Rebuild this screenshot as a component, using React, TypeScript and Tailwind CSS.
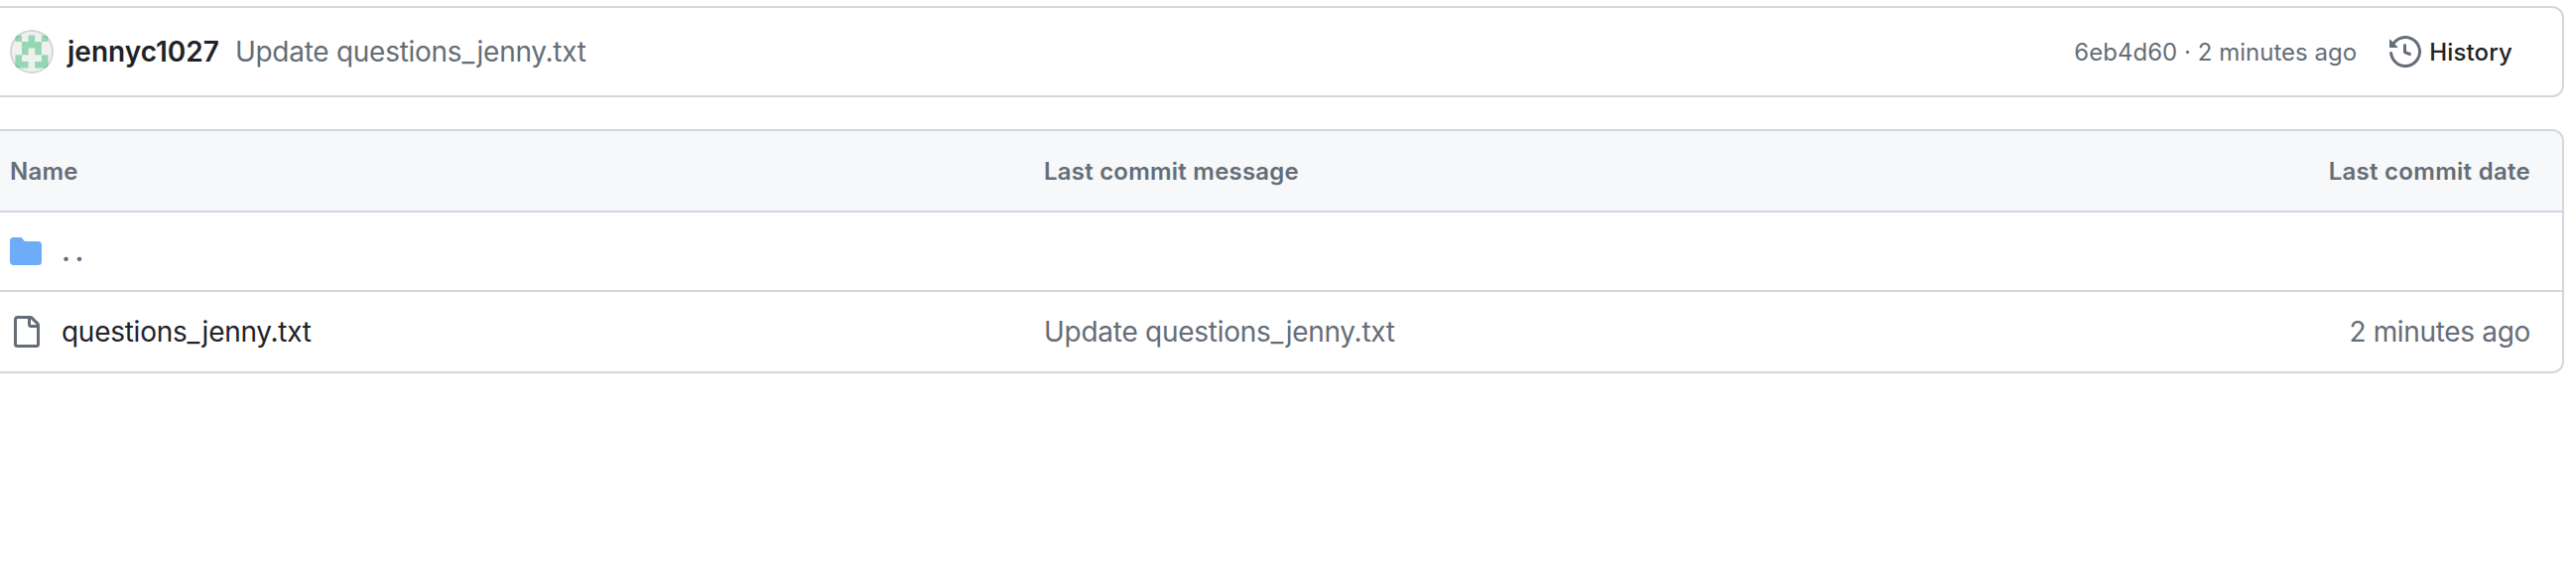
const AVATAR_PATH =
  "M5.4 5.4h6.6v6.6h-6.6zM18.6 5.4h6.6v6.6h6.7v13.2h-6.7v-6.6h-6.6v6.6h-6.6v-13.2h6.6zM31.9 5.4h6.6v6.6h-6.6zM5.4 25.2h6.6v6.7h6.6v6.6h-13.2zM38.5 25.2v13.3h-13.3v-6.6h6.7v-6.7z";

function Avatar() {
  return (
    <svg className="size-11 shrink-0" viewBox="0 0 44 44" aria-hidden="true">
      <defs>
        <clipPath id="avatar-circle">
          <circle cx="22" cy="22" r="22" />
        </clipPath>
      </defs>
      <g clipPath="url(#avatar-circle)">
        <rect width="44" height="44" fill="#f0f0f0" />
        <path d={AVATAR_PATH} fill="#95d7b4" />
      </g>
      <circle cx="22" cy="22" r="21" fill="none" stroke="#1f2328" strokeOpacity="0.12" strokeWidth="2" />
    </svg>
  );
}

function HistoryIcon() {
  return (
    <svg className="size-8 shrink-0 fill-[#656d76]" viewBox="0 0 16 16" aria-hidden="true">
      <path d="m.427 1.927 1.215 1.215a8.002 8.002 0 1 1-1.6 5.685.75.75 0 1 1 1.493-.154 6.5 6.5 0 1 0 1.18-4.458l1.358 1.358A.25.25 0 0 1 3.896 6H.25A.25.25 0 0 1 0 5.75V2.104a.25.25 0 0 1 .427-.177ZM7.75 4a.75.75 0 0 1 .75.75v2.992l2.028.812a.75.75 0 0 1-.557 1.392l-2.5-1A.751.751 0 0 1 7 8.25v-3.5A.75.75 0 0 1 7.75 4Z" />
    </svg>
  );
}

function FolderIcon() {
  return (
    <svg className="size-8 shrink-0 fill-[#6cacf8]" viewBox="0 0 16 16" aria-hidden="true">
      <path d="M1.75 1A1.75 1.75 0 0 0 0 2.75v10.5C0 14.216.784 15 1.75 15h12.5A1.75 1.75 0 0 0 16 13.25v-8.5A1.75 1.75 0 0 0 14.25 3H7.5a.25.25 0 0 1-.2-.1l-.9-1.2C6.07 1.26 5.55 1 5 1H1.75Z" />
    </svg>
  );
}

function FileIcon() {
  return (
    <svg className="size-8 shrink-0 fill-[#656d76]" viewBox="0 0 16 16" aria-hidden="true">
      <path d="M2 1.75C2 .784 2.784 0 3.75 0h6.586c.464 0 .909.184 1.237.513l2.914 2.914c.329.328.513.773.513 1.237v9.586A1.75 1.75 0 0 1 13.25 16h-9.5A1.75 1.75 0 0 1 2 14.25Zm1.75-.25a.25.25 0 0 0-.25.25v12.5c0 .138.112.25.25.25h9.5a.25.25 0 0 0 .25-.25V6h-2.75A1.75 1.75 0 0 1 9 4.25V1.5Zm6.75.062V4.25c0 .138.112.25.25.25h2.688l-.011-.013-2.914-2.914-.013-.011Z" />
    </svg>
  );
}

export default function App() {
  return (
    <main className='h-[580px] w-[2596px] overflow-hidden bg-white pt-1.5 pr-3 font-["Inter","Liberation_Sans",sans-serif] text-[28px] leading-10 text-[#656d76]'>
      <section className="flex h-[92px] items-center rounded-r-xl border-2 border-l-0 border-[#d0d7de] pr-[50px] pl-2.5">
        <Avatar />
        <a className="ml-3.5 font-semibold text-[#1f2328]">jennyc1027</a>
        <a className="ml-4 tracking-[-0.27px]">Update questions_jenny.txt</a>
        <span className="ml-auto pt-0.5 text-2xl leading-10 tracking-[0.02px]">6eb4d60 · 2 minutes ago</span>
        <a className="ml-[33px] flex items-center gap-2 text-2xl leading-10 font-medium text-[#1f2328]">
          <HistoryIcon />
          <span className="pt-0.5 tracking-[0.15px]">History</span>
        </a>
      </section>

      <section className="mt-8 h-[246px] overflow-hidden rounded-r-xl border-2 border-l-0 border-[#d0d7de]">
        <div className="flex h-[82px] items-center border-b-2 border-[#d0d7de] bg-[#f6f8fa] pt-0.5 pr-8 pl-2.5 text-2xl leading-10 font-semibold tracking-[0.22px]">
          <span className="w-[1042px]">Name</span>
          <span>Last commit message</span>
          <span className="ml-auto tracking-[0.28px]">Last commit date</span>
        </div>
        <div className="flex h-20 items-center gap-5 border-b-2 border-[#d0d7de] pl-2.5">
          <FolderIcon />
          <a className="font-semibold tracking-[4.5px]">..</a>
        </div>
        <div className="flex h-20 items-center pr-8 pl-2.5 tracking-[-0.27px]">
          <div className="flex w-[1042px] items-center gap-5">
            <FileIcon />
            <a className="text-[#1f2328]">questions_jenny.txt</a>
          </div>
          <a>Update questions_jenny.txt</a>
          <span className="ml-auto tracking-[-0.33px]">2 minutes ago</span>
        </div>
      </section>
    </main>
  );
}
